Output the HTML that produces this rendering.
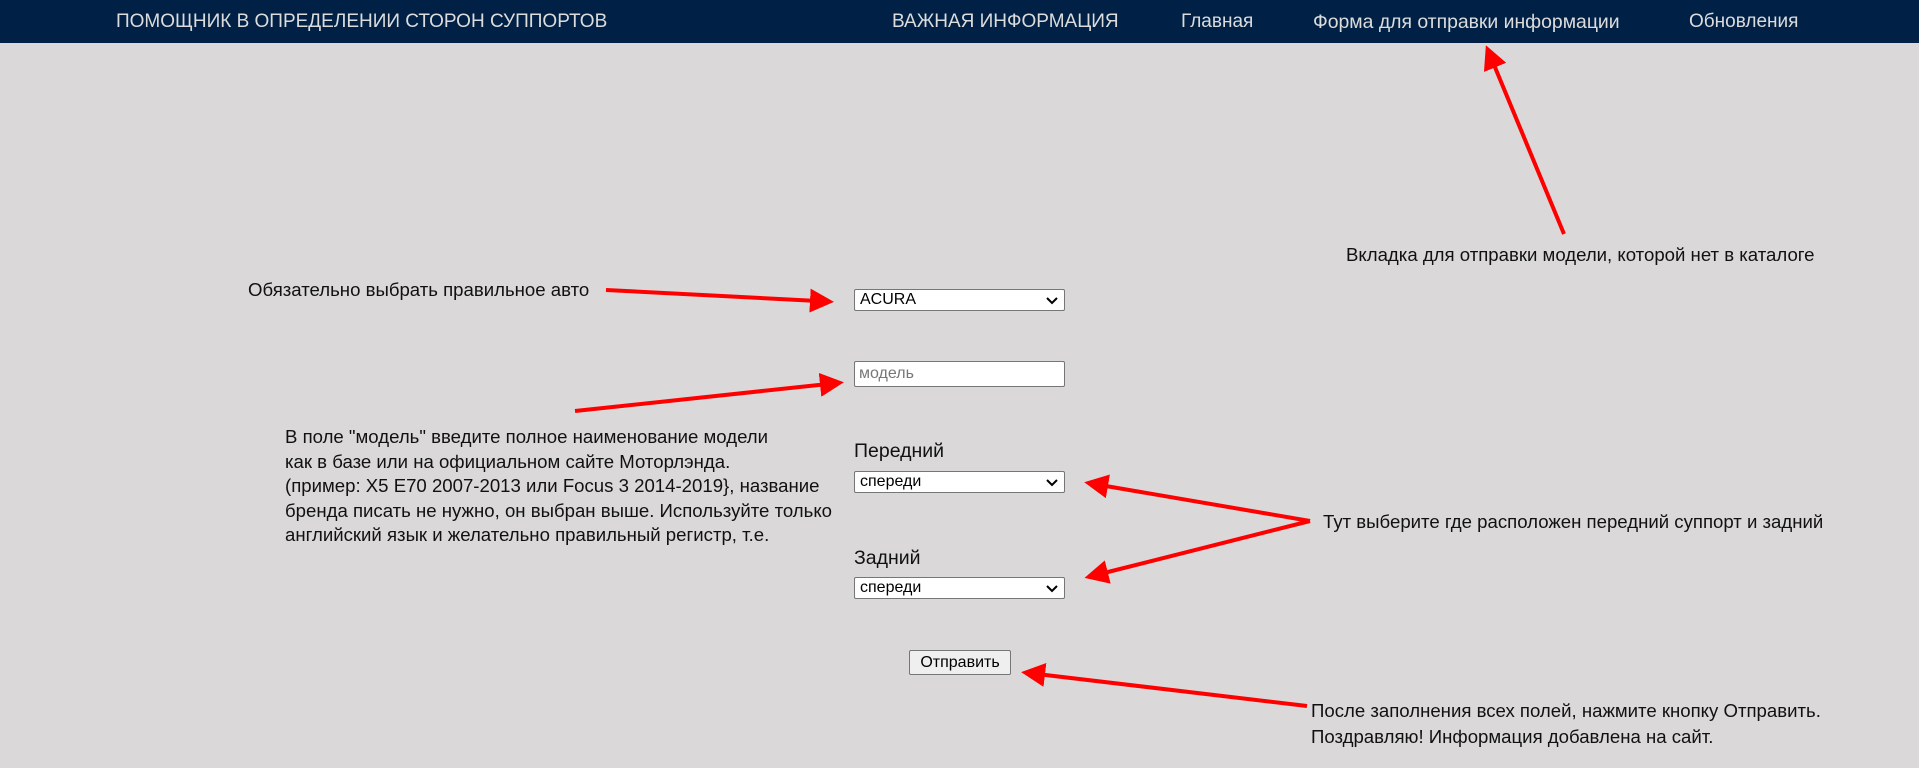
<!DOCTYPE html>
<html><head><meta charset="utf-8"><style>
body{margin:0;width:1919px;height:768px;background:#dad8d9;font-family:"Liberation Sans",sans-serif;position:relative;overflow:hidden}
.hdr{position:absolute;left:0;top:0;width:1919px;height:43px;background:#002145}
.hdr span{position:absolute;top:11px;color:#dcdcdc;font-size:19px;white-space:nowrap}
.t{position:absolute;font-size:18.6px;color:#111;white-space:nowrap}
.sel,.inp{position:absolute;left:854px;width:209px;background:#fff;border:1px solid #767676;border-radius:2px;font-size:16px;box-sizing:content-box}
.sel span{position:absolute;left:5px;top:1px}
.sel svg{position:absolute;right:6px;top:7px}
.lbl{position:absolute;left:854px;font-size:19.5px;color:#111}
</style></head><body>
<div class="hdr">
<span style="left:116px">ПОМОЩНИК В ОПРЕДЕЛЕНИИ СТОРОН СУППОРТОВ</span>
<span style="left:892px">ВАЖНАЯ ИНФОРМАЦИЯ</span>
<span style="left:1181px">Главная</span>
<span style="left:1313px;font-size:19.4px">Форма для отправки информации</span>
<span style="left:1689px">Обновления</span>
</div>

<div class="t" style="left:248px;top:279px">Обязательно выбрать правильное авто</div>
<div class="t" style="left:285px;top:425px;line-height:24.5px">В поле "модель" введите полное наименование модели<br>как в базе или на официальном сайте Моторлэнда.<br>(пример: X5 E70 2007-2013 или Focus 3 2014-2019}, название<br>бренда писать не нужно, он выбран выше. Используйте только<br>английский язык и желательно правильный регистр, т.е.</div>
<div class="t" style="left:1346px;top:244px">Вкладка для отправки модели, которой нет в каталоге</div>
<div class="t" style="left:1323px;top:511px">Тут выберите где расположен передний суппорт и задний</div>
<div class="t" style="left:1311px;top:698px;line-height:26px">После заполнения всех полей, нажмите кнопку Отправить.<br>Поздравляю! Информация добавлена на сайт.</div>

<div class="sel" style="top:289px;height:20px"><span>ACURA</span><svg width="12" height="8"><path d="M1 1l5 5 5-5" stroke="#000" stroke-width="2" fill="none"/></svg></div>
<div class="inp" style="top:361px;height:24px"><span style="position:absolute;left:4px;top:3px;color:#777">модель</span></div>
<div class="lbl" style="top:440px">Передний</div>
<div class="sel" style="top:471px;height:20px"><span>спереди</span><svg width="12" height="8"><path d="M1 1l5 5 5-5" stroke="#000" stroke-width="2" fill="none"/></svg></div>
<div class="lbl" style="top:547px">Задний</div>
<div class="sel" style="top:577px;height:20px"><span>спереди</span><svg width="12" height="8"><path d="M1 1l5 5 5-5" stroke="#000" stroke-width="2" fill="none"/></svg></div>
<div style="position:absolute;left:909px;top:650px;width:100px;height:23px;background:#efefef;border:1px solid #767676;border-radius:2px;font-size:16px;text-align:center;line-height:23px">Отправить</div>

<svg style="position:absolute;left:0;top:0" width="1919" height="768">
<defs><marker id="a" markerWidth="6" markerHeight="6" refX="2" refY="3" orient="auto" markerUnits="strokeWidth"><path d="M0 0L6 3L0 6z" fill="#f00"/></marker></defs>
<g stroke="#f00" stroke-width="4" fill="none" marker-end="url(#a)">
<line x1="1564" y1="234" x2="1492" y2="60"/>
<line x1="606" y1="290" x2="818" y2="301"/>
<line x1="575" y1="411" x2="828" y2="384"/>
<line x1="1310" y1="521" x2="1100" y2="485"/>
<line x1="1310" y1="521" x2="1100" y2="574"/>
<line x1="1307" y1="706" x2="1037" y2="674"/>
</g></svg>
</body></html>
